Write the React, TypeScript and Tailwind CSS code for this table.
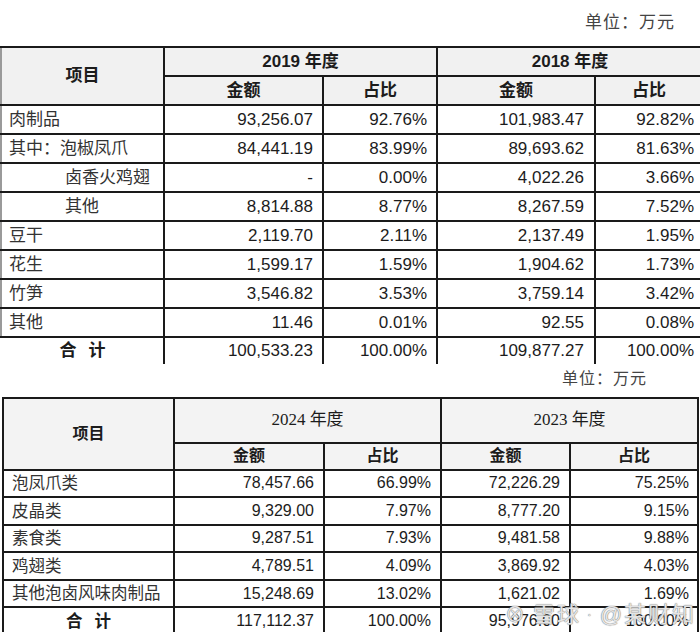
import React from 'react';

const sans = "font-['Liberation_Sans','Noto_Sans_CJK_SC',sans-serif]";

const rows2019 = [
  { name: '肉制品', a: '93,256.07', b: '92.76%', c: '101,983.47', d: '92.82%', indent: false },
  { name: '其中：泡椒凤爪', a: '84,441.19', b: '83.99%', c: '89,693.62', d: '81.63%', indent: false },
  { name: '卤香火鸡翅', a: '-', b: '0.00%', c: '4,022.26', d: '3.66%', indent: true },
  { name: '其他', a: '8,814.88', b: '8.77%', c: '8,267.59', d: '7.52%', indent: true },
  { name: '豆干', a: '2,119.70', b: '2.11%', c: '2,137.49', d: '1.95%', indent: false },
  { name: '花生', a: '1,599.17', b: '1.59%', c: '1,904.62', d: '1.73%', indent: false },
  { name: '竹笋', a: '3,546.82', b: '3.53%', c: '3,759.14', d: '3.42%', indent: false },
  { name: '其他', a: '11.46', b: '0.01%', c: '92.55', d: '0.08%', indent: false },
];

const rows2024 = [
  { name: '泡凤爪类', a: '78,457.66', b: '66.99%', c: '72,226.29', d: '75.25%' },
  { name: '皮晶类', a: '9,329.00', b: '7.97%', c: '8,777.20', d: '9.15%' },
  { name: '素食类', a: '9,287.51', b: '7.93%', c: '9,481.58', d: '9.88%' },
  { name: '鸡翅类', a: '4,789.51', b: '4.09%', c: '3,869.92', d: '4.03%' },
  { name: '其他泡卤风味肉制品', a: '15,248.69', b: '13.02%', c: '1,621.02', d: '1.69%' },
];

export default function App() {
  return (
    <div className={`relative w-[700px] h-[632px] overflow-hidden bg-white text-[#1c1c1c] ${sans}`}>
      {/* unit line, table 1 */}
      <div className="h-[46px] flex justify-end items-start pt-[10px] pr-[25px]">
        <span className="text-[17px] text-[#444] tracking-[1px]">单位：万元</span>
      </div>

      <table className="table-fixed border-collapse w-[702px]">
        <colgroup>
          <col className="w-[163px]" />
          <col className="w-[159px]" />
          <col className="w-[114px]" />
          <col className="w-[158px]" />
          <col className="w-[108px]" />
        </colgroup>
        <thead className="bg-[#f1f1f1] font-bold text-[17px]">
          <tr className="h-[29px]">
            <th rowSpan={2} className="border-2 border-[#1a1a1a] border-l-[#9a9a9a]">项目</th>
            <th colSpan={2} className="border-2 border-[#1a1a1a]">2019 年度</th>
            <th colSpan={2} className="border-2 border-[#1a1a1a]">2018 年度</th>
          </tr>
          <tr className="h-[29px]">
            <th className="border-2 border-[#1a1a1a]">金额</th>
            <th className="border-2 border-[#1a1a1a]">占比</th>
            <th className="border-2 border-[#1a1a1a]">金额</th>
            <th className="border-2 border-[#1a1a1a]">占比</th>
          </tr>
        </thead>
        <tbody className="text-[17px]">
          {rows2019.map((r, i) => (
            <tr key={i} className="h-[29px]">
              <td className={`border-2 border-[#1a1a1a] border-l-[#9a9a9a] text-[17px] text-[#333] whitespace-nowrap ${r.indent ? 'pl-[63px]' : 'pl-[7px]'}`}>{r.name}</td>
              <td className="border-2 border-[#1a1a1a] text-right pr-[9px]">{r.a}</td>
              <td className="border-2 border-[#1a1a1a] text-right pr-[9px]">{r.b}</td>
              <td className="border-2 border-[#1a1a1a] text-right pr-[10px]">{r.c}</td>
              <td className="border-2 border-[#1a1a1a] text-right pr-[8px]">{r.d}</td>
            </tr>
          ))}
          <tr className="h-[26px]">
            <td className="border-x-2 border-[#1a1a1a] border-l-transparent text-center text-[17px] font-bold tracking-[12px] pl-[12px]">合计</td>
            <td className="border-x-2 border-[#1a1a1a] text-right pr-[9px] align-top">100,533.23</td>
            <td className="border-x-2 border-[#1a1a1a] text-right pr-[9px] align-top">100.00%</td>
            <td className="border-x-2 border-[#1a1a1a] text-right pr-[10px] align-top">109,877.27</td>
            <td className="border-x-2 border-[#1a1a1a] text-right pr-[8px] align-top">100.00%</td>
          </tr>
        </tbody>
      </table>

      {/* unit line, table 2 */}
      <div className="h-[33px] flex justify-end items-start pt-[3px] pr-[53px]">
        <span className="text-[16px] text-[#444] tracking-[1px]">单位：万元</span>
      </div>

      <table className="table-fixed border-collapse w-[695px] ml-[2px]">
        <colgroup>
          <col className="w-[171px]" />
          <col className="w-[150px]" />
          <col className="w-[117px]" />
          <col className="w-[129px]" />
          <col className="w-[128px]" />
        </colgroup>
        <thead className="bg-[#f3f3f3] text-[16px]">
          <tr className="h-[45px]">
            <th rowSpan={2} className="border-2 border-[#1a1a1a] font-bold">项目</th>
            <th colSpan={2} className="border-2 border-[#1a1a1a] font-normal font-['Liberation_Serif','Noto_Sans_CJK_SC',serif] text-[17px]">2024 年度</th>
            <th colSpan={2} className="border-2 border-[#1a1a1a] font-normal font-['Liberation_Serif','Noto_Sans_CJK_SC',serif] text-[17px]">2023 年度</th>
          </tr>
          <tr className="h-[27px]">
            <th className="border-2 border-[#1a1a1a] font-bold">金额</th>
            <th className="border-2 border-[#1a1a1a] font-bold">占比</th>
            <th className="border-2 border-[#1a1a1a] font-bold">金额</th>
            <th className="border-2 border-[#1a1a1a] font-bold">占比</th>
          </tr>
        </thead>
        <tbody className="text-[16px]">
          {rows2024.map((r, i) => (
            <tr key={i} className="h-[27.6px]">
              <td className="border-2 border-[#1a1a1a] text-[16.5px] text-[#333] pl-[8px] whitespace-nowrap">{r.name}</td>
              <td className="border-2 border-[#1a1a1a] text-right pr-[9px]">{r.a}</td>
              <td className="border-2 border-[#1a1a1a] text-right pr-[9px]">{r.b}</td>
              <td className="border-2 border-[#1a1a1a] text-right pr-[9px]">{r.c}</td>
              <td className="border-2 border-[#1a1a1a] text-right pr-[8px]">{r.d}</td>
            </tr>
          ))}
          <tr className="h-[28px]">
            <td className="border-2 border-[#1a1a1a] text-center text-[16.5px] font-bold tracking-[12px] pl-[12px]">合计</td>
            <td className="border-2 border-[#1a1a1a] text-right pr-[9px]">117,112.37</td>
            <td className="border-2 border-[#1a1a1a] text-right pr-[9px]">100.00%</td>
            <td className="border-2 border-[#1a1a1a] text-right pr-[9px]">95,976.00</td>
            <td className="border-2 border-[#1a1a1a] text-right pr-[8px]">100.00%</td>
          </tr>
        </tbody>
      </table>

      {/* watermark */}
      <div className="absolute left-[505px] top-[598px] flex items-center gap-[6px] text-[22px] text-white/80 [text-shadow:0_0_1px_#777,0_0_1px_#777] tracking-[2px] whitespace-nowrap">
        <span className="text-[20px]">⊗</span>
        <span>雪球</span>
        <span className="text-[14px]">·</span>
        <span>@某财知</span>
      </div>
    </div>
  );
}
